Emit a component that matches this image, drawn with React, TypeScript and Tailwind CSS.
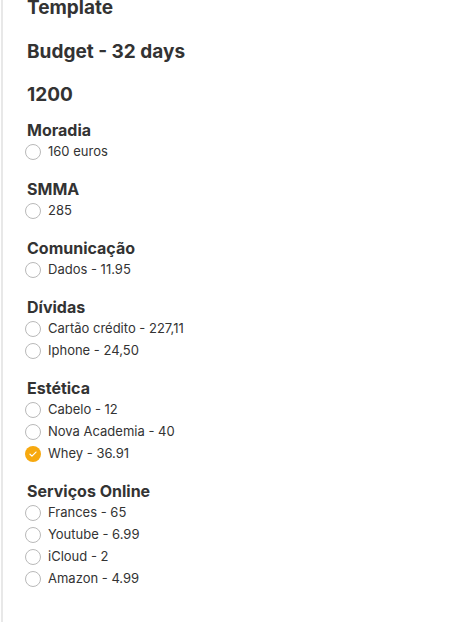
const sections: { title: string; items: { label: string; checked?: boolean }[] }[] = [
  { title: "Moradia", items: [{ label: "160 euros" }] },
  { title: "SMMA", items: [{ label: "285" }] },
  { title: "Comunicação", items: [{ label: "Dados - 11.95" }] },
  {
    title: "Dívidas",
    items: [{ label: "Cartão crédito - 227,11" }, { label: "Iphone - 24,50" }],
  },
  {
    title: "Estética",
    items: [
      { label: "Cabelo - 12" },
      { label: "Nova Academia - 40" },
      { label: "Whey - 36.91", checked: true },
    ],
  },
  {
    title: "Serviços Online",
    items: [
      { label: "Frances - 65" },
      { label: "Youtube - 6.99" },
      { label: "iCloud - 2" },
      { label: "Amazon - 4.99" },
    ],
  },
];

function Check({ checked }: { checked?: boolean }) {
  if (checked) {
    return (
      <span className="flex h-4 w-4 shrink-0 items-center justify-center rounded-full bg-[#f7a90f]">
        <svg viewBox="0 0 16 16" className="h-3 w-3" fill="none">
          <path d="M4 8.3l2.6 2.6L12 5.4" stroke="white" strokeWidth="1.6" strokeLinecap="round" strokeLinejoin="round" />
        </svg>
      </span>
    );
  }
  return <span className="h-4 w-4 shrink-0 rounded-full border border-[#b9b9b9] bg-white" />;
}

export default function App() {
  return (
    <div className="h-[626px] overflow-hidden bg-white font-['Inter',sans-serif] text-[#333]">
      <div className="ml-px h-full border-l-2 border-[#e8e8e8] pl-[24px]">
        <h1 className="-mt-1 text-[19px] font-bold leading-6">Template</h1>
        <h2 className="mt-5 text-[19px] font-bold leading-6">Budget - 32 days</h2>
        <h2 className="mt-[19px] text-[19px] font-bold leading-6">1200</h2>
        <div className="mt-3 flex flex-col gap-[15px]">
          {sections.map((s) => (
            <div key={s.title}>
              <h3 className="text-[16px] font-bold leading-[22px]">{s.title}</h3>
              {s.items.map((it) => (
                <div key={it.label} className="-ml-[2px] flex h-[22px] items-center gap-[7px]">
                  <Check checked={it.checked} />
                  <span className="text-[13px]">{it.label}</span>
                </div>
              ))}
            </div>
          ))}
        </div>
      </div>
    </div>
  );
}
